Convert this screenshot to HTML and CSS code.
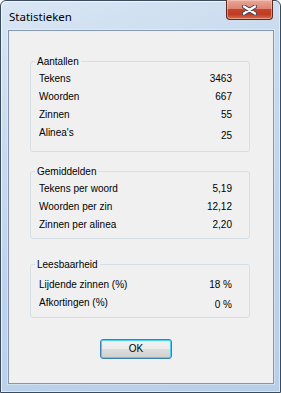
FILE: index.html
```html
<!DOCTYPE html>
<html>
<head>
<meta charset="utf-8">
<link rel="stylesheet" href="styles.css">
</head>
<body>
<div class="window">
  <div class="titlebar">
    <div class="title">Statistieken</div>
    <div class="close">
      <svg width="15" height="10" viewBox="0 0 15 10">
        <path d="M2 1.5 L13 8.5 M13 1.5 L2 8.5" stroke="#3a4656" stroke-width="4.2" stroke-linecap="round" fill="none"/>
        <path d="M2 1.5 L13 8.5 M13 1.5 L2 8.5" stroke="#ffffff" stroke-width="2.4" stroke-linecap="round" fill="none"/>
      </svg>
    </div>
  </div>
  <div class="client">
    <div class="group g1">
      <div class="legend"><span>Aantallen</span></div>
      <div class="rows">
        <div class="row"><span>Tekens</span><span>3463</span></div>
        <div class="row"><span>Woorden</span><span>667</span></div>
        <div class="row"><span>Zinnen</span><span>55</span></div>
        <div class="row"><span>Alinea's</span><span class="low">25</span></div>
      </div>
    </div>
    <div class="group g2">
      <div class="legend"><span>Gemiddelden</span></div>
      <div class="rows">
        <div class="row"><span>Tekens per woord</span><span>5,19</span></div>
        <div class="row"><span>Woorden per zin</span><span>12,12</span></div>
        <div class="row"><span>Zinnen per alinea</span><span>2,20</span></div>
      </div>
    </div>
    <div class="group g3">
      <div class="legend"><span>Leesbaarheid</span></div>
      <div class="rows">
        <div class="row"><span>Lijdende zinnen (%)</span><span>18 %</span></div>
        <div class="row"><span>Afkortingen (%)</span><span class="low2">0 %</span></div>
      </div>
    </div>
    <div class="btn">OK</div>
  </div>
</div>
</body>
</html>
```
FILE: styles.css
```css
html, body {
  margin: 0;
  padding: 0;
  background: #fff;
}

.window {
  width: 281px;
  height: 393px;
  box-sizing: border-box;
  border: 1px solid #3b4b5f;
  border-radius: 6px 6px 0 0;
  background: linear-gradient(160deg, #d9e6f4 0%, #c8daee 30%, #bed3eb 60%, #b9cfe8 100%);
  box-shadow: inset 1px 1px 0 rgba(255,255,255,0.7), inset -1px -1px 0 rgba(255,255,255,0.5);
  display: flex;
  flex-direction: column;
  font-family: "Liberation Sans", Arial, sans-serif;
  font-size: 10px;
  color: #000;
}

.titlebar {
  height: 29px;
  display: flex;
  align-items: flex-start;
  padding-left: 8px;
}

.title {
  margin-top: 8px;
  font-family: "Noto Sans", "Open Sans", sans-serif;
  font-size: 11.5px;
  line-height: 15px;
  color: #000;
}

.close {
  margin-left: auto;
  margin-right: 7px;
  margin-top: -1px;
  width: 47px;
  height: 20px;
  box-sizing: border-box;
  border: 1px solid #5e2a22;
  border-top: none;
  border-radius: 0 0 4px 4px;
  background: linear-gradient(to bottom, #e9a899 0%, #dd8571 45%, #c4452d 50%, #c13a22 75%, #d7704f 100%);
  box-shadow: inset 0 0 0 1px rgba(255,220,210,0.45);
  display: flex;
  align-items: center;
  justify-content: center;
}

.close svg {
  display: block;
  margin-top: 1px;
}

.client {
  flex: 1;
  margin: 0 6px 8px 7px;
  border: 1px solid #8597ad;
  background: #f0f0f0;
  box-shadow: 0 0 0 1px rgba(255,255,255,0.35);
  display: flex;
  flex-direction: column;
  align-items: flex-start;
}

.group {
  margin-left: 21px;
  width: 220px;
  box-sizing: border-box;
  border: 1px solid #d5dfe5;
  border-radius: 3px;
  padding-left: 8px;
  padding-right: 17px;
}

.legend {
  display: flex;
  height: 0;
  margin-left: -4px;
}

.legend span {
  margin-top: -7px;
  height: 13px;
  line-height: 13px;
  padding: 0 2px 0 2px;
  background: #f0f0f0;
}

.g1 {
  margin-top: 30px;
}

.g1 .rows {
  padding-top: 8px;
  padding-bottom: 9px;
}

.g2 {
  margin-top: 19px;
}

.g2 .rows {
  padding-top: 8px;
  padding-bottom: 4px;
}

.g3 {
  margin-top: 25px;
}

.g3 .rows {
  padding-top: 11px;
  padding-bottom: 5px;
}

.row {
  display: flex;
  justify-content: space-between;
  height: 18px;
  line-height: 18px;
}

.low {
  padding-top: 3px;
}

.low2 {
  padding-top: 2px;
}

.btn {
  margin-top: 21px;
  margin-left: 91px;
  width: 72px;
  height: 20px;
  box-sizing: border-box;
  border: 1px solid #3c7fb1;
  border-radius: 3px;
  background: linear-gradient(to bottom, #f2f2f2 0%, #ebebeb 48%, #dddddd 52%, #cfcfcf 100%);
  box-shadow: inset 0 0 0 1px #48d0f7;
  text-align: center;
  line-height: 18px;
}
```
